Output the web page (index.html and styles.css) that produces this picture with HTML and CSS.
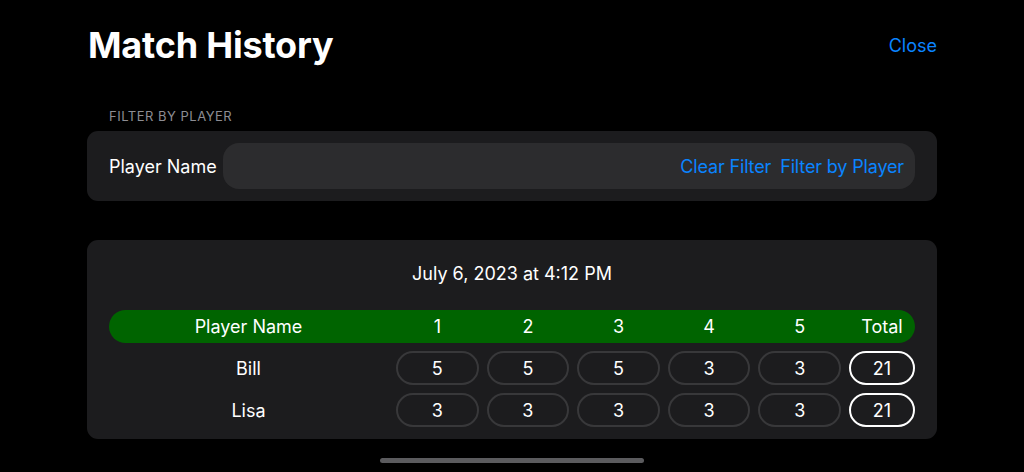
FILE: index.html
```html
<!DOCTYPE html>
<html lang="en">
<head>
<meta charset="utf-8">
<title>Match History</title>
<link rel="stylesheet" href="styles.css">
</head>
<body>
<div class="screen">
  <header class="top">
    <h1 class="title">Match History</h1>
    <a class="link close">Close</a>
  </header>

  <section class="filter">
    <div class="section-label">FILTER BY PLAYER</div>
    <div class="card filter-card">
      <span class="field-label">Player Name</span>
      <div class="field">
        <a class="link">Clear Filter</a>
        <a class="link">Filter by Player</a>
      </div>
    </div>
  </section>

  <section class="card match">
    <div class="date">July 6, 2023 at 4:12 PM</div>
    <div class="row head">
      <span class="name">Player Name</span>
      <span>1</span><span>2</span><span>3</span><span>4</span><span>5</span>
      <span>Total</span>
    </div>
    <div class="row">
      <span class="name">Bill</span>
      <span class="cell">5</span><span class="cell">5</span><span class="cell">5</span><span class="cell">3</span><span class="cell">3</span>
      <span class="cell total">21</span>
    </div>
    <div class="row">
      <span class="name">Lisa</span>
      <span class="cell">3</span><span class="cell">3</span><span class="cell">3</span><span class="cell">3</span><span class="cell">3</span>
      <span class="cell total">21</span>
    </div>
  </section>

  <div class="home-bar"></div>
</div>
</body>
</html>
```

FILE: styles.css
```css
* { box-sizing: border-box; }
html, body {
  margin: 0;
  background: #000;
  color: #fff;
  font-family: Inter, "Noto Sans", "Liberation Sans", sans-serif;
}
.screen {
  width: 1024px;
  height: 472px;
  padding: 0 87px;
  display: flex;
  flex-direction: column;
  overflow: hidden;
}
.top {
  display: flex;
  justify-content: space-between;
  align-items: center;
  height: 43px;
  margin-top: 24px;
}
.title {
  margin: 0 0 0 1px;
  font-size: 36px;
  font-weight: 700;
  letter-spacing: -0.2px;
  line-height: 43px;
}
.link {
  color: #0a84ff;
  font-size: 18px;
  cursor: pointer;
}
.filter {
  margin-top: 41px;
}
.section-label {
  color: #8d8d93;
  font-size: 13px;
  line-height: 16px;
  padding-left: 22px;
  margin-bottom: 7px;
  letter-spacing: 0.5px;
}
.card {
  background: #1c1c1e;
  border-radius: 11px;
}
.filter-card {
  display: flex;
  align-items: center;
  height: 70px;
  padding: 0 22px;
}
.field-label {
  font-size: 18px;
  width: 114px;
  flex: none;
}
.field {
  flex: 1;
  height: 46px;
  background: #2c2c2e;
  border-radius: 16px;
  display: flex;
  justify-content: flex-end;
  align-items: center;
  gap: 9px;
  padding-right: 11px;
}
.field .link {
  letter-spacing: -0.15px;
}
.match {
  margin-top: 39px;
  padding: 23px 22px 12px;
  display: flex;
  flex-direction: column;
  gap: 8px;
}
.date {
  text-align: center;
  font-size: 18px;
  line-height: 22px;
  margin-bottom: 17px;
}
.row {
  display: grid;
  grid-template-columns: 279px repeat(5, 1fr) 66px;
  gap: 8px;
  align-items: center;
  font-size: 18px;
  text-align: center;
}
.head {
  background: #006400;
  border-radius: 17px;
  height: 33px;
}
.cell {
  height: 34px;
  border: 2px solid #38383a;
  border-radius: 17px;
  display: flex;
  align-items: center;
  justify-content: center;
}
.cell.total {
  border-color: #fff;
}
.home-bar {
  align-self: center;
  width: 264px;
  height: 5px;
  border-radius: 3px;
  background: #5b5b5e;
  margin-top: 19px;
}
```
